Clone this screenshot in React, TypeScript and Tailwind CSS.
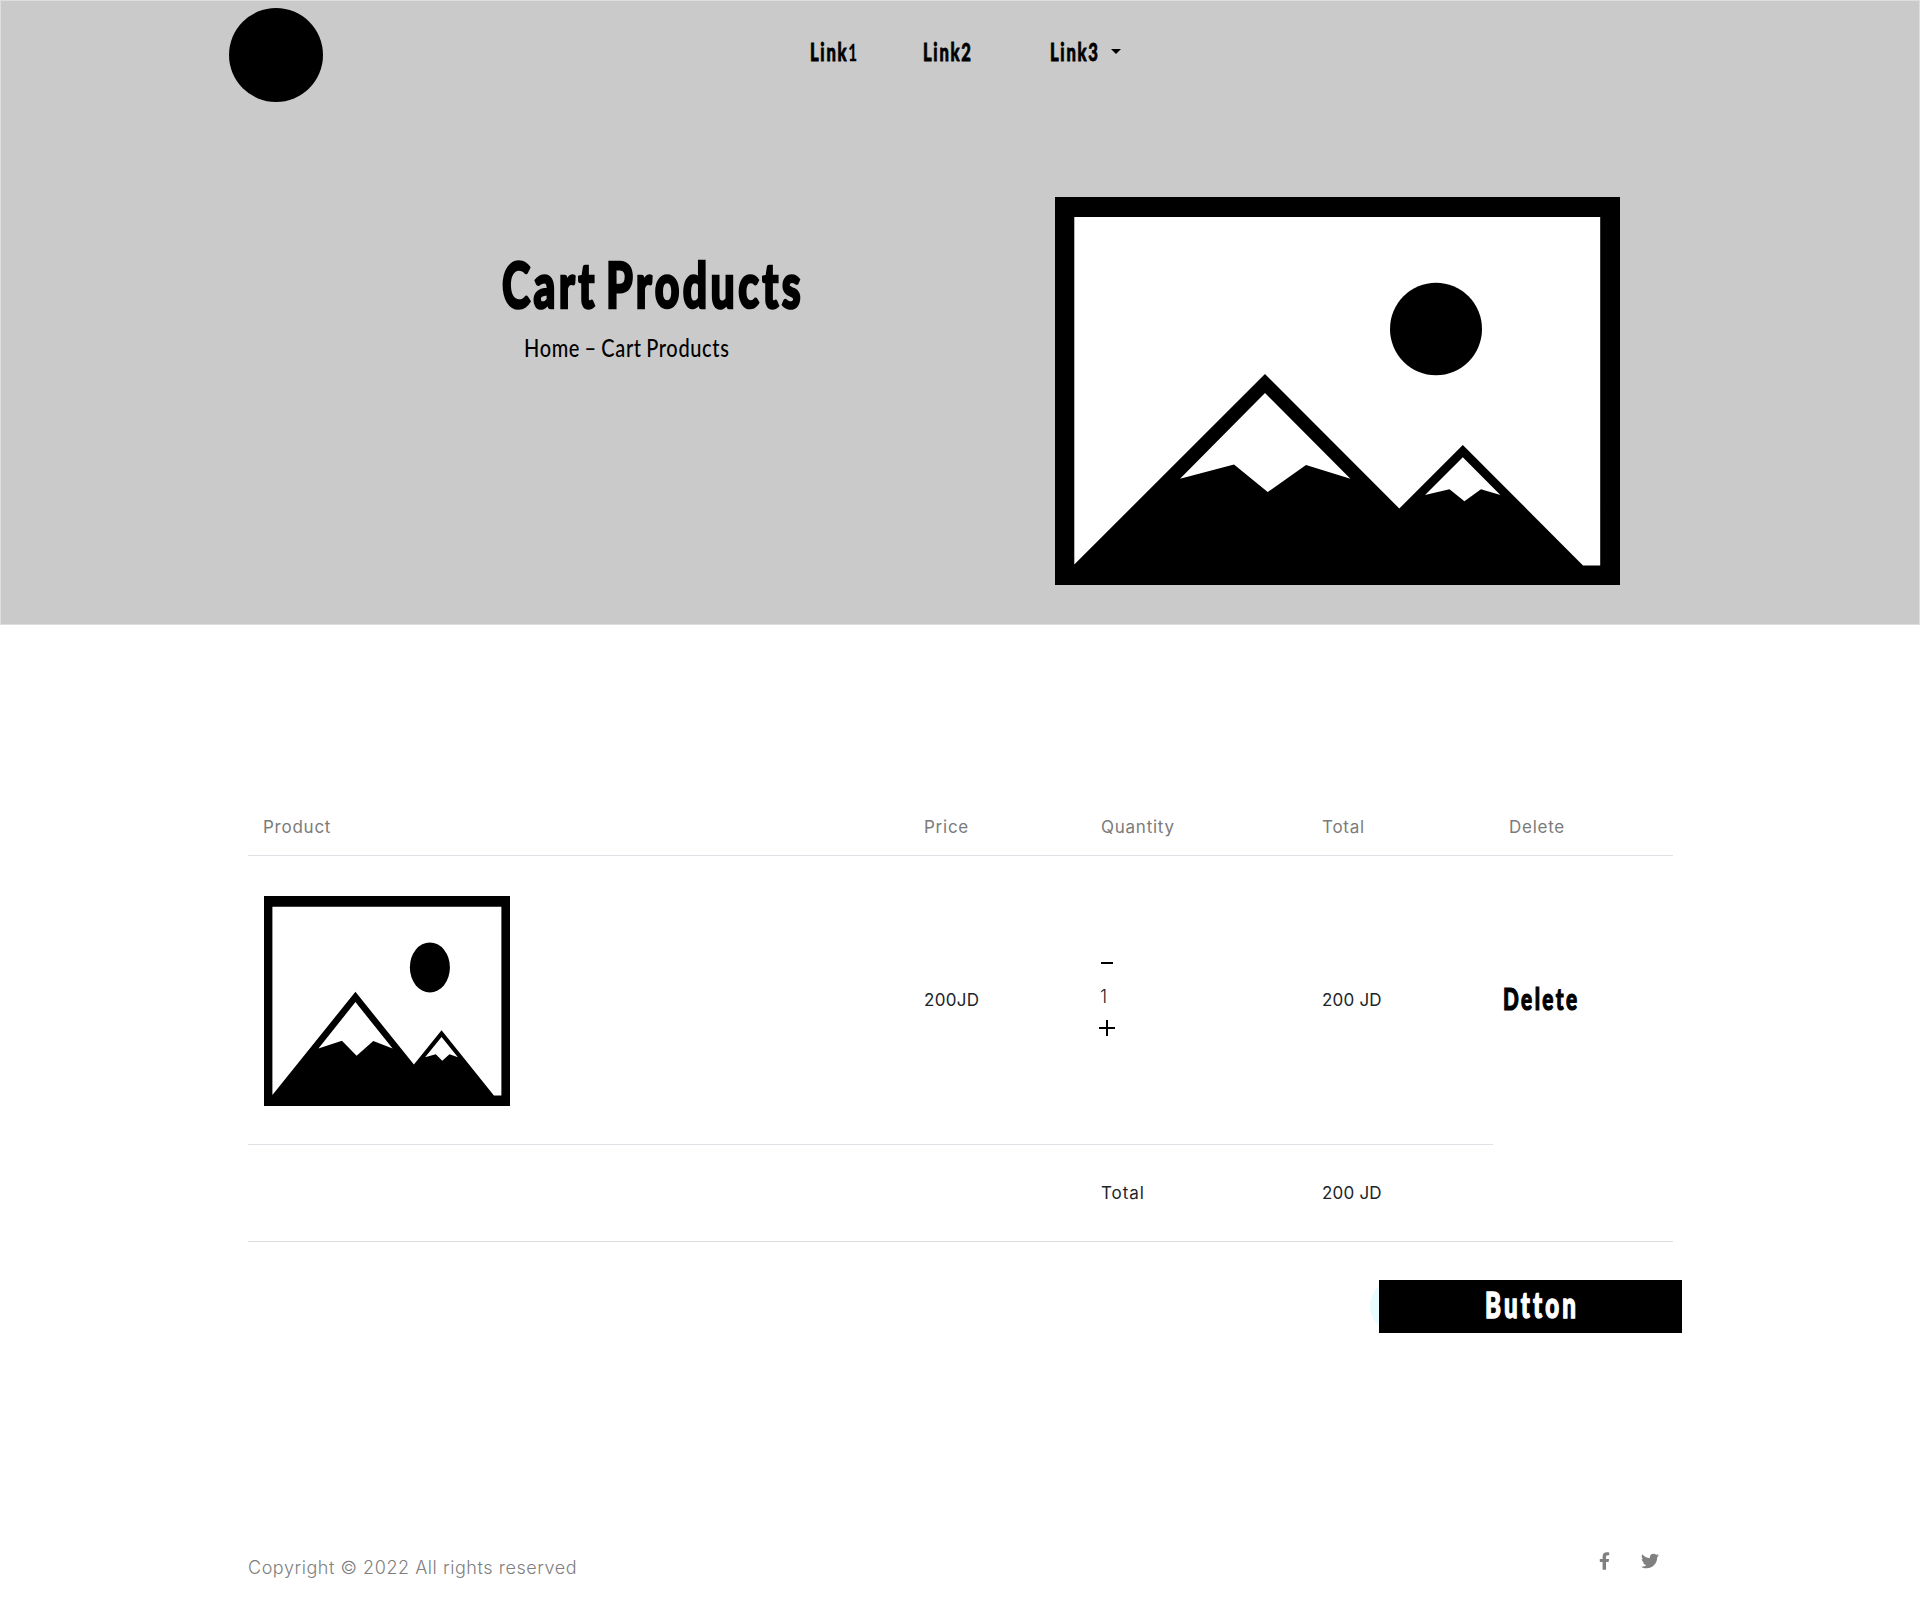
import type { ReactNode } from "react";
import { FaTwitter, FaFacebookF } from "react-icons/fa";

function Picture({ className }: { className: string }) {
  return (
    <svg viewBox="0 0 565 388" preserveAspectRatio="none" className={className} aria-hidden="true">
      <rect width="565" height="388" fill="#000" />
      <path d="M19.3 20H545.2V368.5H528L407.8 248L344.3 311.5L210 177L19.3 367.5Z" fill="#fff" />
      <ellipse cx="381" cy="132" rx="46" ry="46.3" fill="#000" />
      <path d="M210 196L295.4 281.7L251 268L212.7 295L179 267.5L125 281.7Z" fill="#fff" />
      <path d="M407.8 260.3L445.4 298L426 292.2L409.4 304.3L394.5 292.2L370 298Z" fill="#fff" />
    </svg>
  );
}

const display = "block origin-left whitespace-nowrap font-['Lato'] font-black leading-none text-black";
const navText = `${display} scale-x-[0.69] text-[24px] tracking-[2.5px] [-webkit-text-stroke:0.8px_black]`;

function HeadCell({ children }: { children: ReactNode }) {
  return <div className="pl-[15px] tracking-[0.75px] text-[#7b7b7b]">{children}</div>;
}

export default function App() {
  return (
    <div className="h-[1617px] w-[1920px] overflow-hidden bg-white font-['Inter','Liberation_Sans',sans-serif]">
      <header className="h-[625px] border border-[#dedede] bg-[#cacaca]">
        <nav className="flex h-[102px] items-start pl-[228px] pt-[7px]">
          <div className="size-[94px] shrink-0 rounded-full bg-black" />
          <div className="ml-[487px] mt-[32px] flex">
            <a className="w-[113px]">
              <span className={navText}>
                Link<span className="text-[22px] font-bold [-webkit-text-stroke:0.3px_black]">1</span>
              </span>
            </a>
            <a className="w-[127px]">
              <span className={navText}>Link2</span>
            </a>
            <a className="flex w-[80px]">
              <span className="w-[61px]">
                <span className={navText}>Link3</span>
              </span>
              <span className="mt-[9px] h-0 w-0 border-x-[5px] border-t-[5px] border-x-transparent border-t-black" />
            </a>
          </div>
        </nav>
        <div className="flex pl-[501px]">
          <div className="w-[553px] pt-[149px]">
            <h1 className={`${display} h-[64px] scale-x-[0.68] text-[63px] tracking-[4.9px] [word-spacing:-8px] [-webkit-text-stroke:2.6px_black]`}>
              Cart Products
            </h1>
            <p className="ml-[22px] mt-[19px] block origin-left scale-x-[0.8] whitespace-nowrap font-['Lato'] text-[25px] font-medium leading-none tracking-[0.8px] text-black [word-spacing:-1.5px]">
              Home – Cart Products
            </p>
          </div>
          <Picture className="mt-[94px] h-[388px] w-[565px] shrink-0" />
        </div>
      </header>

      <main className="ml-[248px] mt-[175px] w-[1425px] text-[17px] leading-[24px] text-[#212529]">
        <div className="grid h-[56px] grid-cols-[661px_177px_221px_187px_179px] items-start border-b border-[#dee2e6] pt-[15px]">
          <HeadCell>Product</HeadCell>
          <HeadCell>Price</HeadCell>
          <HeadCell>Quantity</HeadCell>
          <HeadCell>Total</HeadCell>
          <HeadCell>Delete</HeadCell>
        </div>
        <div className="flex h-[289px]">
          <div className="grid w-[1245px] grid-cols-[661px_177px_221px_186px] items-center border-b border-[#dee2e6]">
            <div className="pl-[16px] pt-[2px]">
              <Picture className="h-[210px] w-[246px]" />
            </div>
            <div className="pl-[15px] tracking-[0.3px]">200JD</div>
            <div className="flex flex-col pb-[9px] pl-[13px]">
              <svg className="h-[16px] w-[16px]" viewBox="0 0 16 16" stroke="#000" strokeWidth="2">
                <path d="M2 8H14" />
              </svg>
              <span className="mb-[11px] mt-[14px] pl-[1px] text-[18px] font-light leading-[24px]">1</span>
              <svg className="h-[16px] w-[16px]" viewBox="0 0 16 16" stroke="#000" strokeWidth="2">
                <path d="M0 8H16M8 0V16" />
              </svg>
            </div>
            <div className="pl-[15px] tracking-[0.2px]">200 JD</div>
          </div>
          <div className="flex w-[180px] items-center pb-[5px] pl-[10px]">
            <span className={`${display} scale-x-[0.67] text-[31px] tracking-[3.6px] [-webkit-text-stroke:1.2px_black]`}>
              Delete
            </span>
          </div>
        </div>
        <div className="grid h-[97px] grid-cols-[838px_221px_366px] items-center border-b border-[#dcdcdc]">
          <div />
          <div className="pl-[15px] tracking-[0.9px]">Total</div>
          <div className="pl-[15px] tracking-[0.2px]">200 JD</div>
        </div>
        <div className="relative ml-[1131px] mt-[38px] h-[53px] w-[303px]">
          <div className="absolute -left-[9px] top-0 h-[52px] w-[52px] rounded-full bg-[#e8fbff]" />
          <button className="relative flex h-full w-full items-center justify-start bg-black pb-[5px] pl-[106px]">
            <span className="block origin-left scale-x-[0.67] whitespace-nowrap font-['Lato'] text-[36px] font-black leading-none tracking-[4.7px] text-white [-webkit-text-stroke:1.4px_white]">
              Button
            </span>
          </button>
        </div>
      </main>

      <footer className="ml-[248px] mt-[215px] flex w-[1425px] items-start text-[#808080]">
        <p className="w-[1351px] pt-[6px] text-[18px] font-light leading-[27px] tracking-[0.55px]">
          Copyright © 2022 All rights reserved
        </p>
        <FaFacebookF className="mt-[4px] h-[18px] w-[11px]" />
        <FaTwitter className="ml-[31px] mt-[4px] size-[18px]" />
      </footer>
    </div>
  );
}
